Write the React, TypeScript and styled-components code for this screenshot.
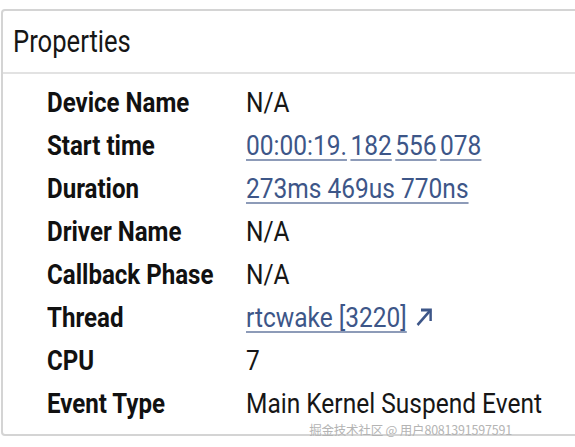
import React from 'react';
import styled, { createGlobalStyle } from 'styled-components';

const GlobalStyle = createGlobalStyle`
  html, body {
    margin: 0;
    padding: 0;
    background: #ffffff;
    overflow: hidden;
  }
  body {
    font-family: Roboto, "Noto Sans", sans-serif;
    color: #121212;
  }
`;

const Page = styled.div`
  position: relative;
  width: 575px;
  height: 447px;
  padding-top: 9px;
  padding-left: 1px;
  box-sizing: border-box;
  overflow: hidden;
`;

const Card = styled.section`
  width: 600px;
  border: 2px solid #d4d4d4;
  border-radius: 4px 0 0 4px;
  background: #fff;
  box-sizing: border-box;
`;

const Header = styled.div`
  padding: 10px 0 11px 10px;
  border-bottom: 2px solid #e2e2e2;
`;

// Stands in for Roboto Condensed, which is not installed
const Narrow = styled.span<{ $scale: number }>`
  display: inline-block;
  transform: scaleX(${p => p.$scale});
  transform-origin: left center;
  white-space: nowrap;
`;

const Title = styled.h2`
  margin: 0;
  font-size: 32px;
  line-height: 40px;
  font-weight: 400;
  color: #161616;
`;

const Table = styled.div`
  padding: 7px 0 9px 44px;
  display: grid;
  grid-template-columns: 199px 1fr;
  grid-auto-rows: 43px;
  align-items: center;
  font-size: 28px;
  line-height: 33px;
`;

const Label = styled.div`
  font-weight: 700;
  color: #111;
`;

const Value = styled.div`
  font-weight: 400;
  color: #161616;
`;

const Link = styled.a`
  color: #3d5688;
  text-decoration: none;
  cursor: pointer;
`;

const Underlined = styled.span<{ $gap?: number }>`
  margin-left: ${p => p.$gap ?? 0}px;
  text-decoration: underline;
  text-decoration-color: #8d9bb8;
  text-decoration-thickness: 2px;
  text-underline-offset: 4px;
`;

const ArrowIcon = styled.svg`
  width: 22px;
  height: 22px;
  margin-left: 9px;
  vertical-align: -1px;
`;

const Watermark = styled.div`
  position: absolute;
  right: 63px;
  bottom: 11px;
  font-family: "Noto Sans CJK SC", "Noto Sans", sans-serif;
  font-size: 12.5px;
  line-height: 12px;
  color: #b4b4b4;
  letter-spacing: -0.2px;
`;

const rows: { label: string; value: React.ReactNode }[] = [
  { label: 'Device Name', value: 'N/A' },
  {
    label: 'Start time',
    value: (
      <Link>
        <Underlined>00:00:19.</Underlined>
        <Underlined $gap={4}>182</Underlined>
        <Underlined $gap={4}>556</Underlined>
        <Underlined $gap={4}>078</Underlined>
      </Link>
    ),
  },
  {
    label: 'Duration',
    value: (
      <Link>
        <Underlined>273ms 469us 770ns</Underlined>
      </Link>
    ),
  },
  { label: 'Driver Name', value: 'N/A' },
  { label: 'Callback Phase', value: 'N/A' },
  {
    label: 'Thread',
    value: (
      <Link>
        <Underlined>rtcwake [3220]</Underlined>
        <ArrowIcon viewBox="0 0 22 22">
          <path d="M3 19 L18 4" stroke="#3d5688" strokeWidth="2.8" fill="none" />
          <path d="M7 4 H18 V15" stroke="#3d5688" strokeWidth="2.8" fill="none" />
        </ArrowIcon>
      </Link>
    ),
  },
  { label: 'CPU', value: '7' },
  { label: 'Event Type', value: 'Main Kernel Suspend Event' },
];

export default function App() {
  return (
    <>
      <GlobalStyle />
      <Page>
        <Card>
          <Header>
            <Title>
              <Narrow $scale={0.8}>Properties</Narrow>
            </Title>
          </Header>
          <Table>
            {rows.map(r => (
              <React.Fragment key={r.label}>
                <Label>
                  <Narrow $scale={0.86}>{r.label}</Narrow>
                </Label>
                <Value>
                  <Narrow $scale={0.875}>{r.value}</Narrow>
                </Value>
              </React.Fragment>
            ))}
          </Table>
        </Card>
        <Watermark>掘金技术社区 @ 用户8081391597591</Watermark>
      </Page>
    </>
  );
}
